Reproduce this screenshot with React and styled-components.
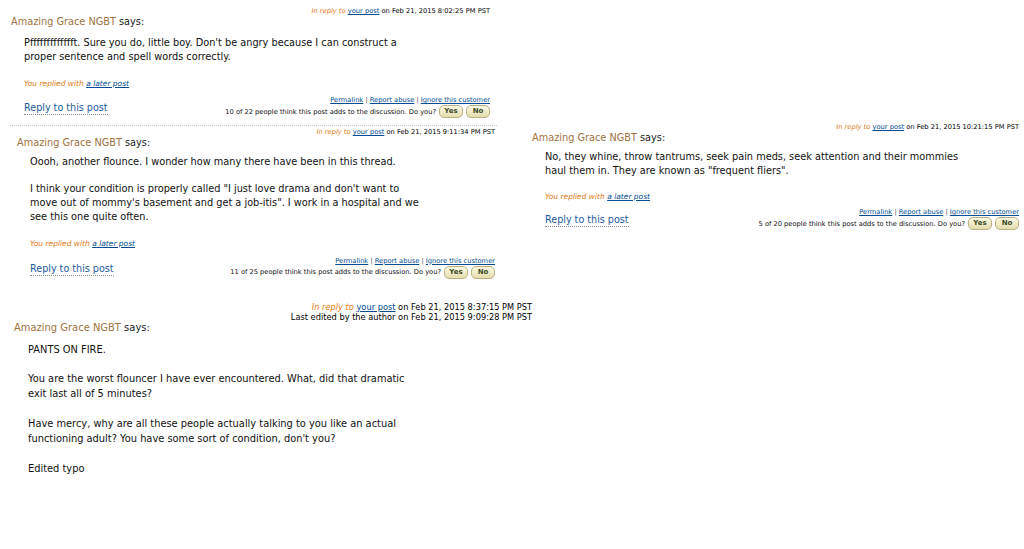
import React from "react";
import styled, { createGlobalStyle } from "styled-components";

const Global = createGlobalStyle`
  html, body { margin: 0; padding: 0; background: #fff; }
  body { font-family: "DejaVu Sans", Verdana, sans-serif; color: #111; }
`;

const Page = styled.div`
  display: flex;
  align-items: flex-start;
  width: 1024px;
  height: 549px;
  padding-top: 6px;
  box-sizing: border-box;
  overflow: hidden;
`;

const Column = styled.div`
  display: flex;
  flex-direction: column;
  width: ${(p) => p.$width}px;
  padding-top: ${(p) => p.$top || 0}px;
  flex: none;
`;

const PostBox = styled.div`
  margin-left: ${(p) => p.$left}px;
  width: ${(p) => p.$width}px;
  margin-top: ${(p) => p.$top || 0}px;
  display: flex;
  flex-direction: column;
`;

const Meta = styled.div`
  text-align: right;
  font-size: ${(p) => (p.$large ? 8.25 : 6.7)}px;
  line-height: 10px;
  color: #000;
  white-space: nowrap;
`;

const Orange = styled.span`
  color: #e47911;
  font-style: italic;
`;

const SmallLink = styled.a`
  color: #004b91;
  text-decoration: underline;
  cursor: pointer;
`;

const Header = styled.div`
  font-size: ${(p) => (p.$large ? 9.95 : 9.75)}px;
  line-height: 12px;
  color: #222;
  white-space: nowrap;
`;

const Name = styled.span`
  color: #a0723f;
`;

const Body = styled.div`
  margin-top: ${(p) => p.$gap}px;
  padding-left: ${(p) => (p.$large ? 14 : 13)}px;
  font-size: ${(p) => (p.$large ? 9.85 : 9.75)}px;
  line-height: ${(p) => p.$lh}px;
  color: #111;
  white-space: nowrap;
`;

const Para = styled.p`
  margin: 0 0 ${(p) => p.$lh}px 0;
  &:last-child { margin-bottom: 0; }
`;

const Replied = styled.div`
  margin-top: ${(p) => p.$gap}px;
  padding-left: 13px;
  font-size: 7.5px;
  line-height: 10px;
  font-style: italic;
  color: #e47911;
  white-space: nowrap;
`;

const Footer = styled.div`
  margin-top: ${(p) => p.$gap}px;
  padding-left: 13px;
  display: flex;
  justify-content: space-between;
  align-items: flex-end;
`;

const ReplyLink = styled.a`
  font-size: 9.6px;
  line-height: 12px;
  color: #1d5aa0;
  text-decoration: none;
  border-bottom: 1px dotted #8a8a8a;
  margin-bottom: 3px;
  white-space: nowrap;
  cursor: pointer;
`;

const Actions = styled.div`
  display: flex;
  flex-direction: column;
  align-items: flex-end;
  font-size: 6.7px;
  color: #111;
  white-space: nowrap;
`;

const ActionLinks = styled.div`
  line-height: 10px;
  color: #555;
`;

const Votes = styled.div`
  display: flex;
  align-items: center;
  height: 13px;
  gap: 3px;
`;

const VoteButton = styled.button`
  width: 24px;
  height: 13px;
  padding: 0;
  border: 1px solid #b9b27e;
  border-radius: 5px;
  background: linear-gradient(#fbf9e6, #e4ddae);
  font-family: "DejaVu Sans", Verdana, sans-serif;
  font-size: 7px;
  font-weight: bold;
  color: #3b4a24;
  line-height: 11px;
  cursor: pointer;
`;

const Separator = styled.div`
  margin: 7px 0 0 10px;
  width: 487px;
  border-top: 1px dotted #c8c8c8;
`;

function Post({ left, width, top, replyDate, edited, paragraphs, large, lh = 14, gaps, votes }) {
  return (
    <PostBox $left={left} $width={width} $top={top}>
      <Meta $large={large}>
        <Orange>In reply to</Orange> <SmallLink>your post</SmallLink> on {replyDate}
      </Meta>
      {edited && <Meta $large={large}>Last edited by the author on {edited}</Meta>}
      <Header $large={large}>
        <Name>Amazing Grace NGBT</Name> says:
      </Header>
      <Body $large={large} $lh={lh} $gap={gaps[0]}>
        {paragraphs.map((lines, i) => (
          <Para key={i} $lh={lh}>
            {lines.map((l, j) => (
              <React.Fragment key={j}>
                {l}
                {j < lines.length - 1 && <br />}
              </React.Fragment>
            ))}
          </Para>
        ))}
      </Body>
      {votes && (
        <>
          <Replied $gap={gaps[1]}>
            You replied with <SmallLink>a later post</SmallLink>
          </Replied>
          <Footer $gap={gaps[2]}>
            <ReplyLink>Reply to this post</ReplyLink>
            <Actions>
              <ActionLinks>
                <SmallLink>Permalink</SmallLink> | <SmallLink>Report abuse</SmallLink> |{" "}
                <SmallLink>Ignore this customer</SmallLink>
              </ActionLinks>
              <Votes>
                <span>{votes[0]} of {votes[1]} people think this post adds to the discussion. Do you?</span>
                <VoteButton>Yes</VoteButton>
                <VoteButton>No</VoteButton>
              </Votes>
            </Actions>
          </Footer>
        </>
      )}
    </PostBox>
  );
}

export default function App() {
  return (
    <>
      <Global />
      <Page>
        <Column $width={532}>
          <Post
            left={11}
            width={479}
            replyDate="Feb 21, 2015 8:02:25 PM PST"
            gaps={[8, 15, 6]}
            votes={[10, 22]}
            paragraphs={[
              [
                "Pffffffffffffft. Sure you do, little boy. Don't be angry because I can construct a",
                "proper sentence and spell words correctly.",
              ],
            ]}
          />
          <Separator />
          <Post
            left={17}
            width={478}
            top={1}
            replyDate="Feb 21, 2015 9:11:34 PM PST"
            gaps={[6, 15, 7]}
            lh={13.7}
            votes={[11, 25]}
            paragraphs={[
              ["Oooh, another flounce. I wonder how many there have been in this thread."],
              [
                "I think your condition is properly called \"I just love drama and don't want to",
                "move out of mommy's basement and get a job-itis\". I work in a hospital and we",
                "see this one quite often.",
              ],
            ]}
          />
          <Post
            left={14}
            width={518}
            top={23}
            large
            lh={14.9}
            replyDate="Feb 21, 2015 8:37:15 PM PST"
            edited="Feb 21, 2015 9:09:28 PM PST"
            gaps={[9]}
            paragraphs={[
              ["PANTS ON FIRE."],
              [
                "You are the worst flouncer I have ever encountered. What, did that dramatic",
                "exit last all of 5 minutes?",
              ],
              [
                "Have mercy, why are all these people actually talking to you like an actual",
                "functioning adult? You have some sort of condition, don't you?",
              ],
              ["Edited typo"],
            ]}
          />
        </Column>
        <Column $width={492} $top={116}>
          <Post
            left={0}
            width={487}
            replyDate="Feb 21, 2015 10:21:15 PM PST"
            gaps={[6, 14, 5]}
            votes={[5, 20]}
            paragraphs={[
              [
                "No, they whine, throw tantrums, seek pain meds, seek attention and their mommies",
                "haul them in. They are known as \"frequent fliers\".",
              ],
            ]}
          />
        </Column>
      </Page>
    </>
  );
}
